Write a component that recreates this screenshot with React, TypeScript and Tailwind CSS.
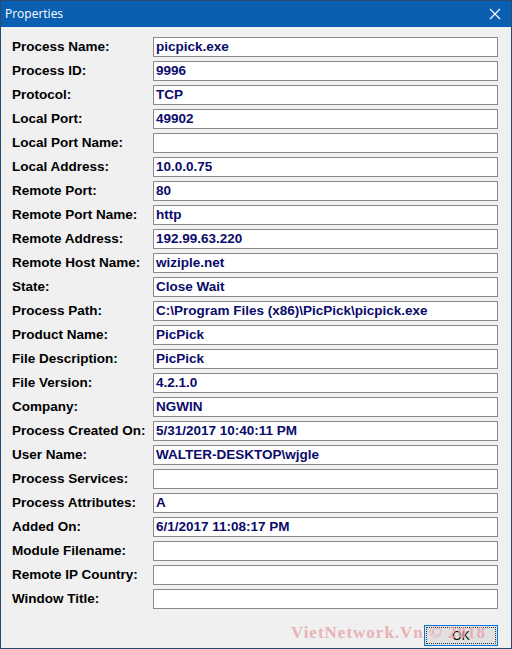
import React from 'react';

const rows: [string, string][] = [
  ['Process Name:', 'picpick.exe'],
  ['Process ID:', '9996'],
  ['Protocol:', 'TCP'],
  ['Local Port:', '49902'],
  ['Local Port Name:', ''],
  ['Local Address:', '10.0.0.75'],
  ['Remote Port:', '80'],
  ['Remote Port Name:', 'http'],
  ['Remote Address:', '192.99.63.220'],
  ['Remote Host Name:', 'wiziple.net'],
  ['State:', 'Close Wait'],
  ['Process Path:', 'C:\\Program Files (x86)\\PicPick\\picpick.exe'],
  ['Product Name:', 'PicPick'],
  ['File Description:', 'PicPick'],
  ['File Version:', '4.2.1.0'],
  ['Company:', 'NGWIN'],
  ['Process Created On:', '5/31/2017 10:40:11 PM'],
  ['User Name:', 'WALTER-DESKTOP\\wjgle'],
  ['Process Services:', ''],
  ['Process Attributes:', 'A'],
  ['Added On:', '6/1/2017 11:08:17 PM'],
  ['Module Filename:', ''],
  ['Remote IP Country:', ''],
  ['Window Title:', ''],
];

export default function App() {
  return (
    <div className="w-[512px] h-[649px] flex flex-col bg-[#f0f0f0] border border-[#2b4a6f] relative overflow-hidden">
      {/* title bar */}
      <div className="h-[26px] bg-[#0a5fb2] flex items-center justify-between pl-[4px] pr-[8px] shrink-0">
        <span className="text-white text-[12px] font-['Open_Sans',sans-serif]">Properties</span>
        <svg width="12" height="12" viewBox="0 0 12 12" className="mr-[2px]">
          <path d="M1 1 L11 11 M11 1 L1 11" stroke="white" strokeWidth="1.2" />
        </svg>
      </div>

      <div className="flex flex-col gap-[4px] pt-[10px] pl-[11px] pr-[13px] font-['Liberation_Sans',Arial,sans-serif] font-bold text-[13.5px]">
        {rows.map(([label, value]) => (
          <div key={label} className="flex items-center h-[20px]">
            <div className="w-[141px] text-black">{label}</div>
            <div className="flex-1 h-[20px] bg-white border border-[#8a8a8a] px-[2px] flex items-center text-[#0b0b6b] whitespace-nowrap">
              {value}
            </div>
          </div>
        ))}
      </div>

      <div className="flex justify-end pr-[13px] mt-[16px]">
        <button className="w-[74px] h-[21px] bg-[#e1e1e1] border border-[#0078d7] outline outline-1 outline-dotted outline-offset-[-3px] outline-[#333] text-[12px] font-['Liberation_Sans',Arial,sans-serif] text-black">
          OK
        </button>
      </div>

      <div className="absolute left-[290px] top-[619px] text-[17px] font-bold font-['Liberation_Serif',serif] text-[#e8a3aa] opacity-80 tracking-[1px] pointer-events-none">
        VietNetwork.Vn © 2018
      </div>
    </div>
  );
}
